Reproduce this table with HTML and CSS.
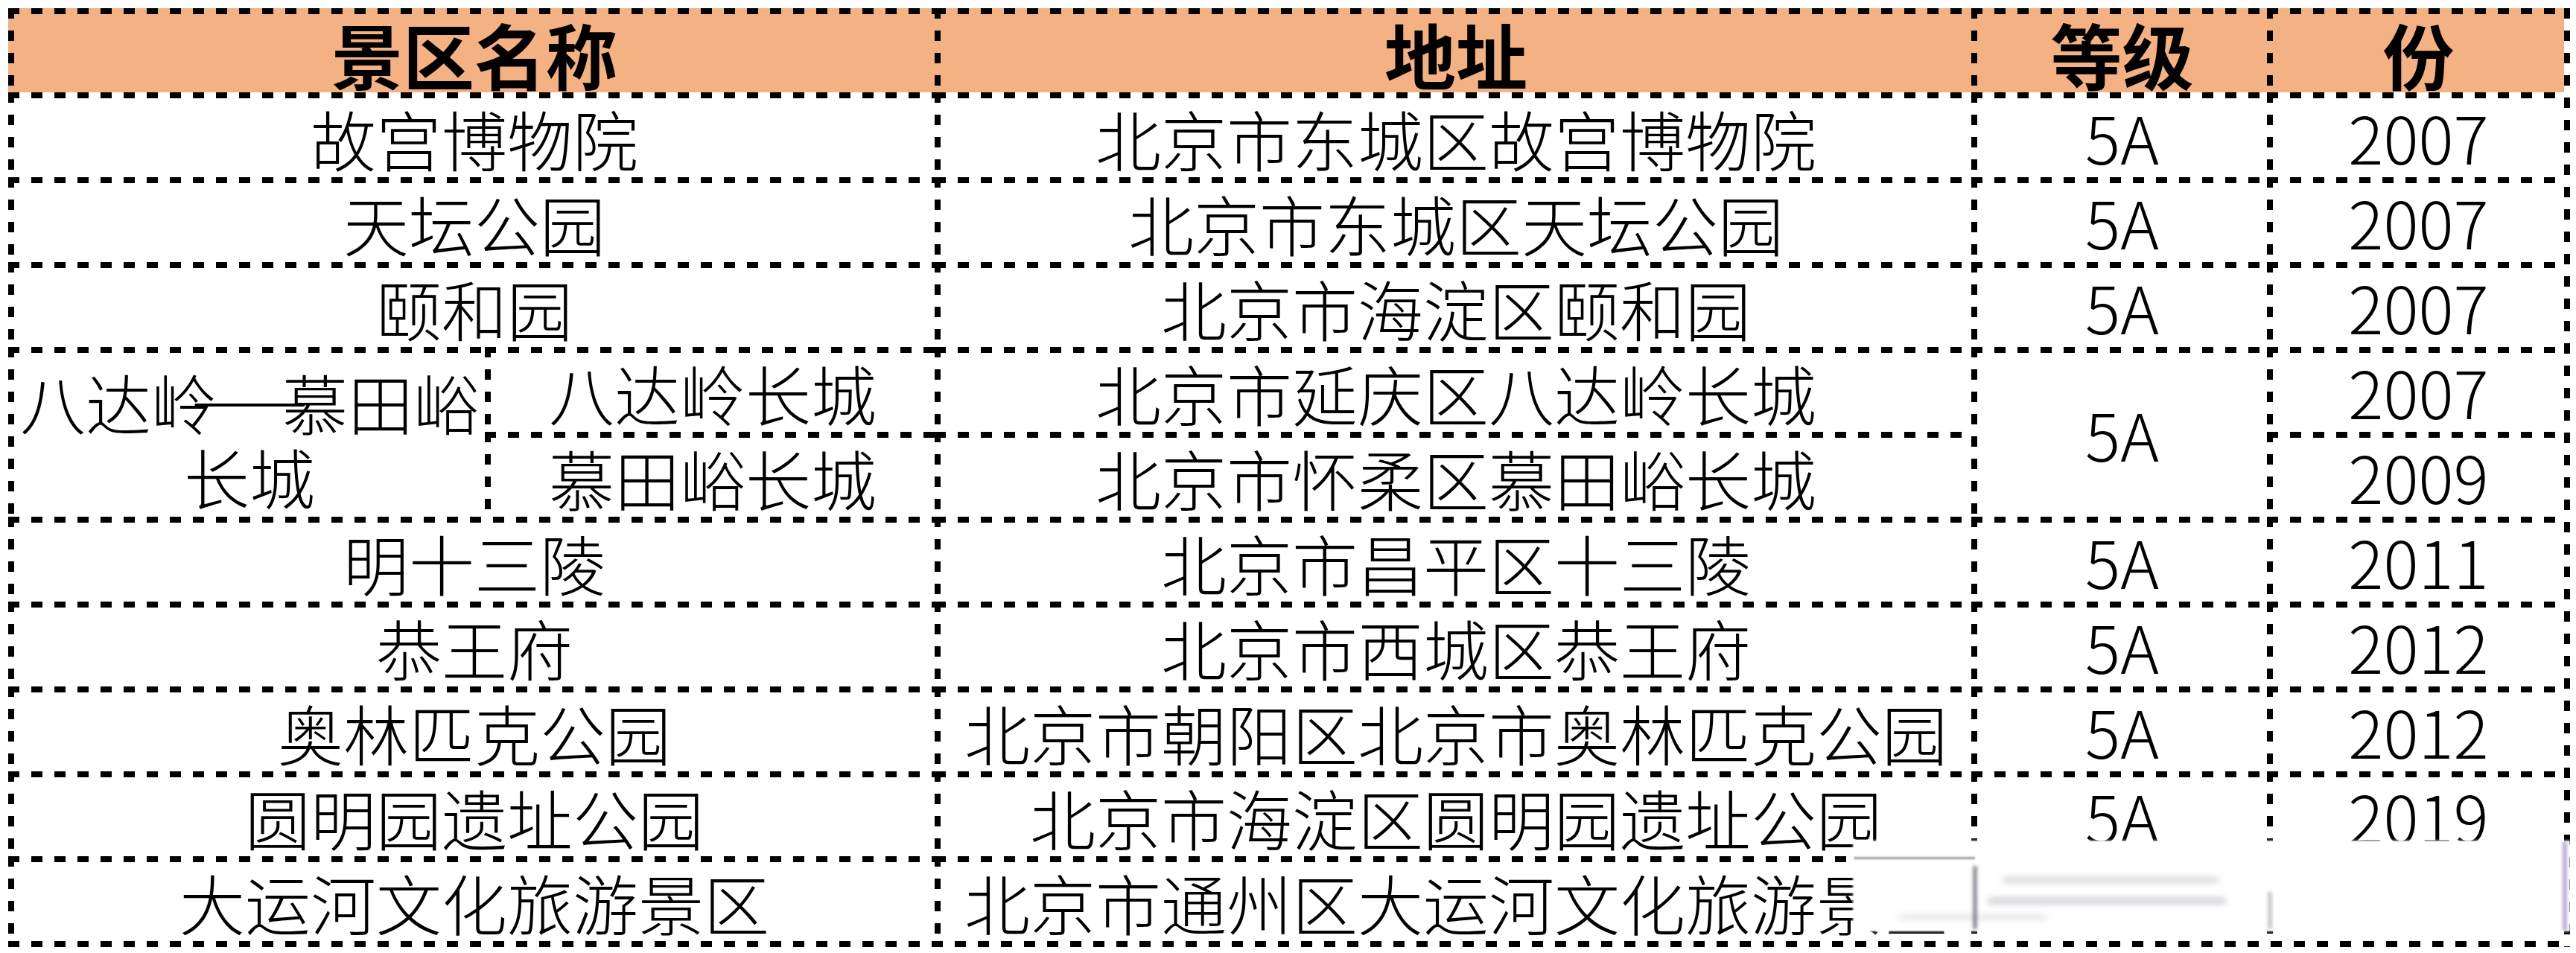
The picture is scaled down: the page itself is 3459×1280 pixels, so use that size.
FILE: index.html
```html
<!DOCTYPE html>
<html lang="zh-CN">
<head>
<meta charset="utf-8">
<title>北京5A景区</title>
<link rel="stylesheet" href="styles.css">
</head>
<body>
<div class="sheet">
  <div class="table">
    <div class="cell head name">景区名称</div>
    <div class="cell head">地址</div>
    <div class="cell head">等级</div>
    <div class="cell head">份</div>

    <div class="cell name">故宫博物院</div>
    <div class="cell">北京市东城区故宫博物院</div>
    <div class="cell num">5A</div>
    <div class="cell num">2007</div>

    <div class="cell name">天坛公园</div>
    <div class="cell">北京市东城区天坛公园</div>
    <div class="cell num">5A</div>
    <div class="cell num">2007</div>

    <div class="cell name">颐和园</div>
    <div class="cell">北京市海淀区颐和园</div>
    <div class="cell num">5A</div>
    <div class="cell num">2007</div>

    <div class="cell tall wrap">八达岭<span class="dash">—</span>慕田峪长城</div>
    <div class="cell">八达岭长城</div>
    <div class="cell">北京市延庆区八达岭长城</div>
    <div class="cell tall num">5A</div>
    <div class="cell num">2007</div>

    <div class="cell">慕田峪长城</div>
    <div class="cell">北京市怀柔区慕田峪长城</div>
    <div class="cell num">2009</div>

    <div class="cell name">明十三陵</div>
    <div class="cell">北京市昌平区十三陵</div>
    <div class="cell num">5A</div>
    <div class="cell num">2011</div>

    <div class="cell name">恭王府</div>
    <div class="cell">北京市西城区恭王府</div>
    <div class="cell num">5A</div>
    <div class="cell num">2012</div>

    <div class="cell name">奥林匹克公园</div>
    <div class="cell">北京市朝阳区北京市奥林匹克公园</div>
    <div class="cell num">5A</div>
    <div class="cell num">2012</div>

    <div class="cell name">圆明园遗址公园</div>
    <div class="cell">北京市海淀区圆明园遗址公园</div>
    <div class="cell num">5A</div>
    <div class="cell num">2019</div>

    <div class="cell name">大运河文化旅游景区</div>
    <div class="cell">北京市通州区大运河文化旅游景区</div>
    <div class="cell num">5A</div>
    <div class="cell num">2020</div>
  </div>

  <div class="watermark">
    <span class="wm-h"></span>
    <span class="wm-streak s1"></span>
    <span class="wm-streak s2"></span>
    <span class="wm-streak s3"></span>
    <span class="wm-v v1"></span>
    <span class="wm-v v2"></span>
    <span class="wm-v v3"></span>
  </div>
</div>
</body>
</html>
```

FILE: styles.css
```css
html, body {
  margin: 0;
  padding: 0;
  background: #ffffff;
}

body {
  font-family: "Noto Sans CJK SC", "Noto Sans", sans-serif;
  color: #000;
}

.sheet {
  position: relative;
  width: 3459px;
  height: 1280px;
  overflow: hidden;
  background: #ffffff;
}

.table {
  display: grid;
  grid-template-columns: 640px 604px 1392px 397px 399px;
  grid-template-rows: 113px repeat(10, 114px);
  width: max-content;
  margin: 11px 0 0 11px;
  padding: 0 8px 8px 0;
  background-image:
    repeating-linear-gradient(to bottom, #000 0 14px, transparent 14px 30px),
    repeating-linear-gradient(to right, #000 0 15px, transparent 15px 31px);
  background-size: 8px 100%, 100% 8px;
  background-position: right top, left bottom;
  background-repeat: no-repeat;
}

.cell {
  display: flex;
  align-items: center;
  justify-content: center;
  text-align: center;
  padding: 8px 0 0 8px;
  font-size: 88px;
  font-weight: 300;
  line-height: 1;
  white-space: nowrap;
  background-image:
    repeating-linear-gradient(to right, #000 0 15px, transparent 15px 31px),
    repeating-linear-gradient(to bottom, #000 0 14px, transparent 14px 30px);
  background-size: 100% 8px, 8px 100%;
  background-position: 0 0, 0 0;
  background-repeat: no-repeat;
}

.name {
  grid-column: span 2;
}

.tall {
  grid-row: span 2;
}

.num {
  padding-bottom: 5px;
}

.wrap {
  display: block;
  white-space: normal;
  line-height: 100px;
  padding-top: 23px;
}

.dash {
  display: inline-block;
  width: 88px;
  text-align: center;
  transform: translateY(-9px) scaleX(2.1);
}

.head {
  background-color: #f4b183;
  font-size: 96px;
  font-weight: 700;
}

.watermark {
  position: absolute;
  left: 2489px;
  top: 1130px;
  width: 961px;
  height: 120px;
  background: #ffffff;
  box-shadow: 0 0 3px 1px rgba(255, 255, 255, 0.9);
  overflow: hidden;
}

.wm-h {
  position: absolute;
  left: 0;
  top: 21px;
  width: 163px;
  height: 3px;
  background: rgba(90, 70, 90, 0.55);
  filter: blur(1px);
}

.wm-streak {
  position: absolute;
  height: 8px;
  border-radius: 4px;
  background: rgba(120, 120, 140, 0.28);
  filter: blur(4px);
}

.s1 { left: 200px; top: 48px; width: 290px; }
.s2 { left: 180px; top: 76px; width: 320px; background: rgba(110, 110, 130, 0.35); }
.s3 { left: 60px; top: 98px; width: 200px; background: rgba(140, 140, 150, 0.2); }

.wm-v {
  position: absolute;
  width: 6px;
  background: rgba(70, 60, 80, 0.55);
  filter: blur(2px);
}

.v1 { left: 160px; top: 33px; height: 85px; }
.v2 { left: 556px; top: 68px; height: 50px; background: rgba(90, 110, 100, 0.35); }
.v3 { left: 952px; top: 0; height: 120px; background: rgba(120, 90, 170, 0.5); }
```
